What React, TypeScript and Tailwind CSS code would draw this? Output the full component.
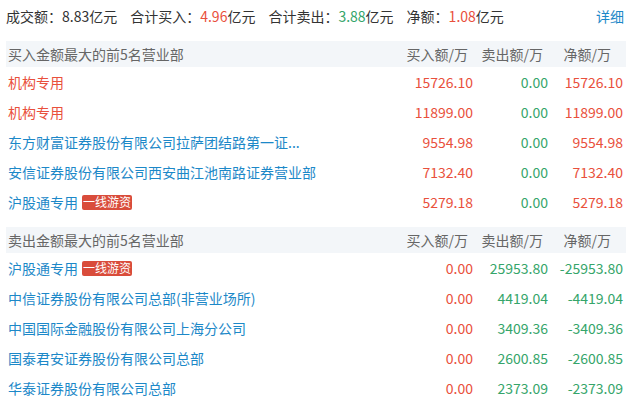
const buyRows = [
  { name: '机构专用', color: 'red', buy: '15726.10', sell: '0.00', net: '15726.10' },
  { name: '机构专用', color: 'red', buy: '11899.00', sell: '0.00', net: '11899.00' },
  { name: '东方财富证券股份有限公司拉萨团结路第一证...', color: 'blue', buy: '9554.98', sell: '0.00', net: '9554.98' },
  { name: '安信证券股份有限公司西安曲江池南路证券营业部', color: 'blue', buy: '7132.40', sell: '0.00', net: '7132.40' },
  { name: '沪股通专用', color: 'blue', tag: true, buy: '5279.18', sell: '0.00', net: '5279.18' },
];

const sellRows = [
  { name: '沪股通专用', color: 'blue', tag: true, buy: '0.00', sell: '25953.80', net: '-25953.80' },
  { name: '中信证券股份有限公司总部(非营业场所)', color: 'blue', buy: '0.00', sell: '4419.04', net: '-4419.04' },
  { name: '中国国际金融股份有限公司上海分公司', color: 'blue', buy: '0.00', sell: '3409.36', net: '-3409.36' },
  { name: '国泰君安证券股份有限公司总部', color: 'blue', buy: '0.00', sell: '2600.85', net: '-2600.85' },
  { name: '华泰证券股份有限公司总部', color: 'blue', buy: '0.00', sell: '2373.09', net: '-2373.09' },
];

type Row = { name: string; color: string; tag?: boolean; buy: string; sell: string; net: string };

const RED = 'text-[#e9503c]';
const GREEN = 'text-[#35a56a]';

const numColor = (v: string, kind: 'buy' | 'sell' | 'net') => {
  if (kind === 'buy') return RED;
  if (kind === 'sell') return GREEN;
  return v.startsWith('-') ? GREEN : RED;
};

const Section = ({ title, rows }: { title: string; rows: Row[] }) => (
  <div>
    <div className="flex h-[26px] items-center bg-[#f3f6f9] text-[#666]">
      <div className="flex-1 pl-[2px]">{title}</div>
      <div className="w-[75px] pr-[5px] text-right">买入额/万</div>
      <div className="w-[75px] pr-[5px] text-right">卖出额/万</div>
      <div className="w-[78px] pr-[15px] text-right">净额/万</div>
    </div>
    {rows.map((r, i) => (
      <div key={i} className="flex h-[30px] items-center">
        <div className="flex flex-1 items-center pl-[2px]">
          <span className={r.color === 'red' ? RED : 'text-[#1c88c8]'}>{r.name}</span>
          {r.tag && (
            <span className="ml-[4px] flex h-[15px] items-center rounded-[2px] bg-[#d94c3b] px-[1px] text-[12px] leading-none text-white">
              一线游资
            </span>
          )}
        </div>
        <div className={`w-[75px] text-right ${numColor(r.buy, 'buy')}`}>{r.buy}</div>
        <div className={`w-[75px] text-right ${numColor(r.sell, 'sell')}`}>{r.sell}</div>
        <div className={`w-[78px] pr-[3px] text-right ${numColor(r.net, 'net')}`}>{r.net}</div>
      </div>
    ))}
  </div>
);

export default function App() {
  return (
    <div
      className="h-[399px] w-[636px] overflow-hidden bg-white pl-[6px] pr-[10px] text-[14px] text-[#333]"
      style={{ fontFamily: '"Noto Sans CJK SC", "Noto Sans", sans-serif' }}
    >
      <div className="flex h-[32px] items-center">
        <div className="flex flex-1 gap-[13px]">
          <span>
            成交额：<span>8.83</span>亿元
          </span>
          <span>
            合计买入：<span className={RED}>4.96</span>亿元
          </span>
          <span>
            合计卖出：<span className={GREEN}>3.88</span>亿元
          </span>
          <span>
            净额：<span className={RED}>1.08</span>亿元
          </span>
        </div>
        <a href="#" className="pr-[2px] text-[#1c88c8]">
          详细
        </a>
      </div>
      <div className="mt-[9px]">
        <Section title="买入金额最大的前5名营业部" rows={buyRows} />
      </div>
      <div className="mt-[10px]">
        <Section title="卖出金额最大的前5名营业部" rows={sellRows} />
      </div>
    </div>
  );
}
